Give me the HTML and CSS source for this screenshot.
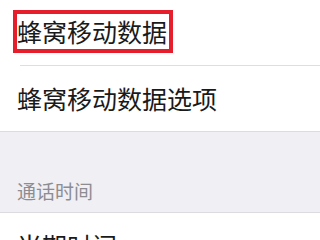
FILE: index.html
```html
<!DOCTYPE html>
<html lang="zh-CN">
<head>
<meta charset="utf-8">
<link rel="stylesheet" href="styles.css">
</head>
<body>
	<div class="settingsList">
		<div class="cellRow firstRow">
			<span class="highlightBox">蜂窝移动数据</span>
		</div>
		<div class="cellRow">蜂窝移动数据选项</div>
	</div>

	<div class="groupHeader">通话时间</div>

	<div class="settingsList">
		<div class="cellRow">当期时间</div>
	</div>
</body>
</html>
```
FILE: styles.css
```css
html, body {
	margin: 0px;
	padding: 0px;
	background-color: #ffffff;
	font-family: "Noto Sans CJK SC", "Noto Sans", sans-serif;
	overflow: hidden;
}

.settingsList {
	background-color: #ffffff;
	border-bottom: 1px solid #dcdce0;
}

.cellRow {
	height: 65px;
	line-height: 65px;
	padding-left: 17px;
	font-size: 25px;
	color: #1a1a1a;
	white-space: nowrap;
}

.firstRow {
	height: 66px;
	line-height: normal;
	padding-left: 13px;
	box-sizing: border-box;
	padding-top: 10px;
	position: relative;
}

.firstRow::after {
	content: "";
	position: absolute;
	left: 20px;
	right: 0px;
	bottom: 0px;
	height: 1px;
	background-color: #dedee2;
}

.highlightBox {
	display: inline-block;
	border: 4px solid #e61e2b;
	line-height: 35px;
	height: 35px;
	padding-right: 2px;
}

.groupHeader {
	height: 81px;
	box-sizing: border-box;
	background-color: #efeff4;
	padding: 0px 17px 9px 17px;
	display: flex;
	align-items: flex-end;
	font-size: 19px;
	line-height: 24px;
	color: #8c8c91;
	border-bottom: 1px solid #dcdce0;
}
```
